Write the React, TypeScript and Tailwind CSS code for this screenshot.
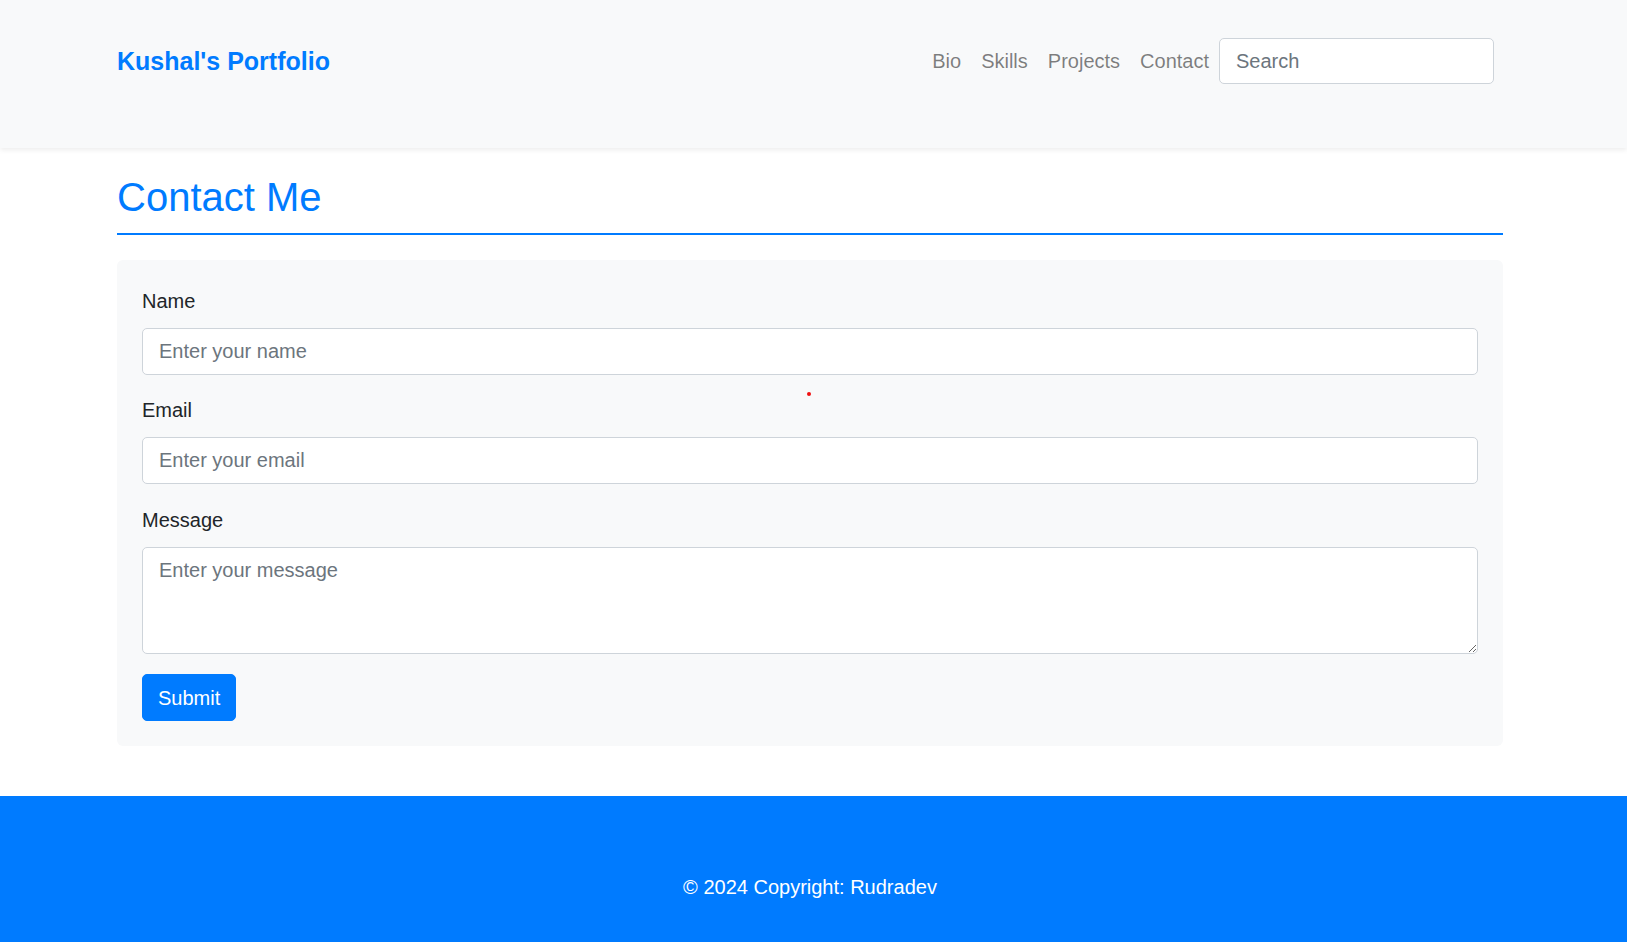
import React from "react";

const navLinks = ["Bio", "Skills", "Projects", "Contact"];

function Header() {
  return (
    <header className="h-[148px] bg-[#f8f9fa] shadow-[0_2px_5px_rgba(0,0,0,0.075)] relative z-10">
      <div className="ml-[117px] w-[1386px] pt-[38px] flex items-center justify-between">
        <a href="#" className="text-[25px] leading-[46px] font-bold text-[#007bff]">
          Kushal's Portfolio
        </a>
        <nav className="flex items-center pr-[9px]">
          {navLinks.map((link) => (
            <a key={link} href="#" className="px-[10px] text-[20px] leading-[30px] text-black/50">
              {link}
            </a>
          ))}
          <input
            type="text"
            placeholder="Search"
            className="w-[275px] h-[46px] px-[16px] bg-white border border-[#ced4da] rounded-[5px] text-[20px] text-[#495057] placeholder:text-[#6c757d] outline-none"
          />
        </nav>
      </div>
    </header>
  );
}

function Field({ label, placeholder, type = "text", gap = "mb-[20px]" }: { label: string; placeholder: string; type?: string; gap?: string }) {
  return (
    <div className={gap}>
      <label className="block mb-[12px] text-[20px] leading-[30px] text-[#212529]">{label}</label>
      <input
        type={type}
        placeholder={placeholder}
        className="block w-full h-[47px] px-[16px] bg-white border border-[#ced4da] rounded-[5px] text-[20px] text-[#495057] placeholder:text-[#6c757d] outline-none"
      />
    </div>
  );
}

function ContactForm() {
  return (
    <form className="relative bg-[#f8f9fa] rounded-[6px] px-[25px] pt-[26px] pb-[25px]">
      {/* cursor marker */}
      <span className="absolute left-[690px] top-[132px] w-[4px] h-[4px] rounded-full bg-[#f01010]"></span>
      <Field label="Name" placeholder="Enter your name" />
      <Field label="Email" placeholder="Enter your email" type="email" gap="mb-[21px]" />
      <div className="mb-[20px]">
        <label className="block mb-[12px] text-[20px] leading-[30px] text-[#212529]">Message</label>
        <textarea
          rows={3}
          placeholder="Enter your message"
          className="block w-full h-[107px] px-[16px] py-[7px] bg-white border border-[#ced4da] rounded-[5px] text-[20px] leading-[30px] text-[#495057] placeholder:text-[#6c757d] outline-none"
        />
      </div>
      <button
        type="button"
        className="h-[47px] px-[15px] bg-[#007bff] border border-[#007bff] rounded-[5px] text-[20px] text-white"
      >
        Submit
      </button>
    </form>
  );
}

export default function App() {
  return (
    <div className="min-h-screen bg-white font-['Liberation_Sans',Arial,sans-serif]">
      <Header />
      <main className="ml-[117px] w-[1386px]">
        <h2 className="mt-[25px] pb-[12px] mb-[25px] border-b-2 border-[#007bff] text-[40px] leading-[48px] text-[#007bff]">
          Contact Me
        </h2>
        <ContactForm />
      </main>
      <footer className="mt-[50px] bg-[#007bff] pt-[76px] pb-[76px]">
        <div className="ml-[117px] w-[1386px] text-center text-[20px] leading-[30px] text-white">
          © 2024 Copyright: Rudradev
        </div>
      </footer>
    </div>
  );
}
